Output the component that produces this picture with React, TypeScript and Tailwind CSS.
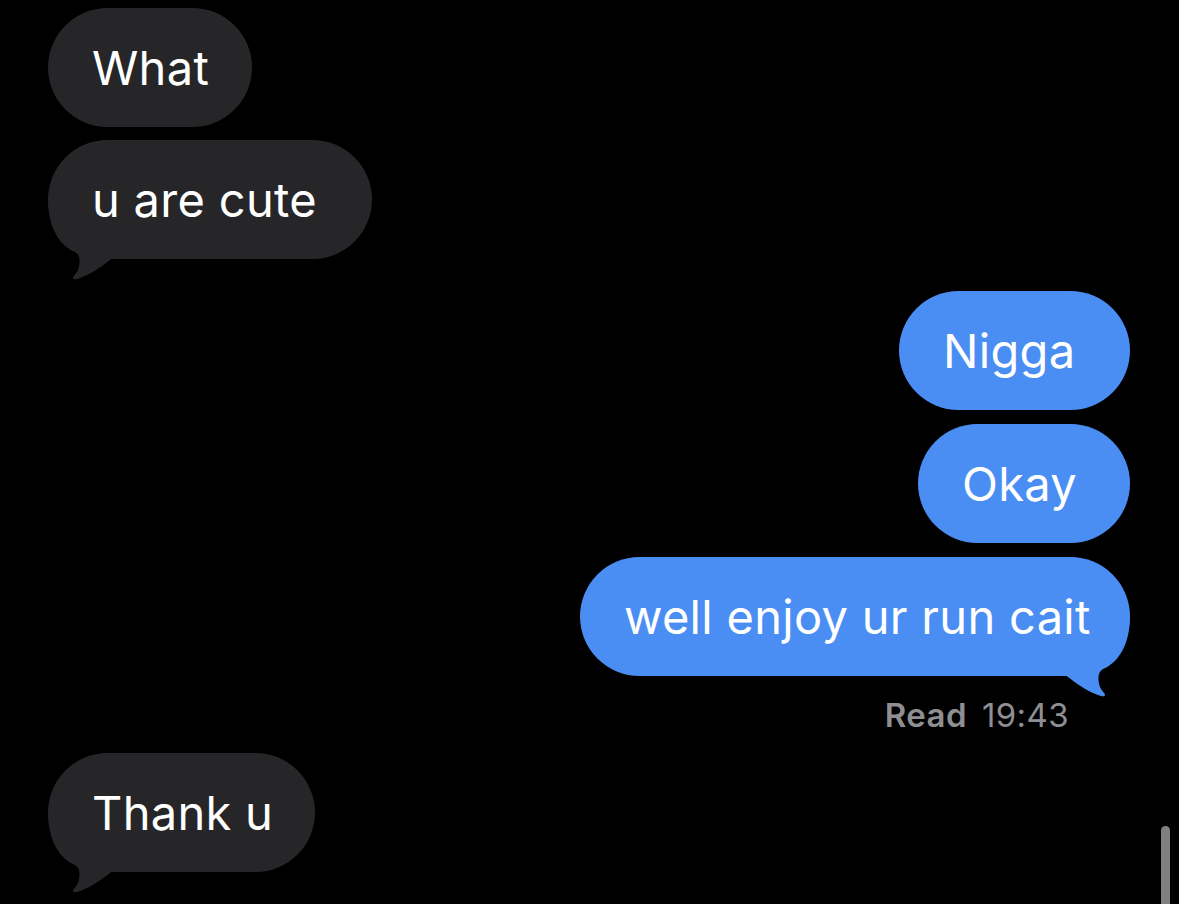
import React from 'react';

interface Message {
  text: string;
  mine: boolean;
  width: number;
  tail?: boolean;
  gap: number;
}

// Conversation as it appears on screen, top to bottom
const messages: Message[] = [
  { text: 'What', mine: false, width: 204, gap: 8 },
  { text: 'u are cute', mine: false, width: 324, tail: true, gap: 13 },
  { text: 'Nigga', mine: true, width: 231, gap: 32 },
  { text: 'Okay', mine: true, width: 212, gap: 14 },
  { text: 'well enjoy ur run cait', mine: true, width: 550, tail: true, gap: 14 },
];

const BubbleTail: React.FC<{ mine: boolean }> = ({ mine }) => (
  <svg
    className={mine ? 'absolute right-0 top-0 -scale-x-100 overflow-visible' : 'absolute left-0 top-0 overflow-visible'}
    width="80"
    height="145"
    viewBox="0 0 80 145"
    aria-hidden="true"
  >
    <path
      d="M 0 59 C 0 88 12 106 27 112 C 33 115 32 124 30 130 C 29 133 25 136 25 138 C 25 140 28 139.5 32 138 C 44 134 54 126 64 118.5 L 70 118.5 L 70 59 Z"
      fill={mine ? '#4a8ef4' : '#262629'}
    />
  </svg>
);

const Bubble: React.FC<{ msg: Message }> = ({ msg }) => (
  <div
    className={`flex ${msg.mine ? 'justify-end' : 'justify-start'}`}
    style={{ marginTop: msg.gap }}
  >
    <div
      className={`relative h-[119px] rounded-full flex items-center pl-[44px] ${msg.mine ? 'bg-[#4a8ef4]' : 'bg-[#262629]'}`}
      style={{ width: msg.width }}
    >
      {msg.tail && <BubbleTail mine={msg.mine} />}
      <span className="relative text-white text-[47px] leading-none tracking-[0.3px] whitespace-nowrap">
        {msg.text}
      </span>
    </div>
  </div>
);

export default function App() {
  return (
    <div className="relative w-full h-[904px] bg-black overflow-hidden font-['Inter','Liberation_Sans',sans-serif]">
      <div className="flex flex-col pl-[48px] pr-[49px]">
        {messages.map((m, i) => (
          <Bubble key={i} msg={m} />
        ))}

        <div className="flex justify-end pr-[61px] mt-[21px] text-[33px] leading-[36px] tracking-[0.4px] text-[#8e8e93]">
          <span className="font-semibold">Read</span>
          <span className="ml-[15px]">19:43</span>
        </div>

        <Bubble msg={{ text: 'Thank u', mine: false, width: 267, tail: true, gap: 20 }} />
      </div>

      {/* scroll indicator */}
      <div className="absolute right-[9px] top-[826px] w-[9px] h-[100px] rounded-full bg-[#808080]" />
    </div>
  );
}
